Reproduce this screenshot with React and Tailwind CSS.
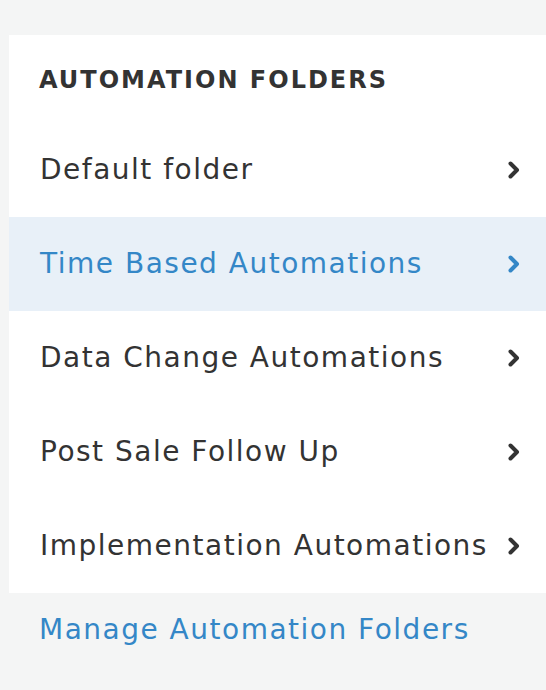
const folders = [
  'Default folder',
  'Time Based Automations',
  'Data Change Automations',
  'Post Sale Follow Up',
  'Implementation Automations',
];

const Chevron = () => (
  <svg
    width="14"
    height="20"
    viewBox="0 0 14 20"
    fill="none"
    stroke="currentColor"
    strokeWidth="4"
    strokeLinecap="round"
    strokeLinejoin="round"
  >
    <path d="M3.5 3.5L10 10l-6.5 6.5" />
  </svg>
);

const App = () => {
  const active = 1;

  return (
    <div className="w-[546px] min-h-[690px] bg-[#f4f5f5] pt-[35px] pl-[9px] font-['DejaVu_Sans',sans-serif]">
      <div className="bg-white">
        <div className="h-[88px] flex items-center pl-[30px] pt-[2px]">
          <span className="text-[24px] font-bold tracking-[2px] text-[#333] uppercase">
            Automation Folders
          </span>
        </div>
        {folders.map((name, i) => (
          <div
            key={name}
            className={
              i === active
                ? 'h-[94px] flex items-center justify-between pl-[31px] pr-[25px] bg-[#e8f0f8] text-[#3487c7]'
                : 'h-[94px] flex items-center justify-between pl-[31px] pr-[25px] text-[#333]'
            }
          >
            <span className="text-[28px] tracking-[1.5px] whitespace-nowrap">{name}</span>
            <Chevron />
          </div>
        ))}
      </div>
      <div className="h-[74px] flex items-center pl-[30px]">
        <a href="#" className="text-[28px] tracking-[1.5px] text-[#3487c7] whitespace-nowrap">
          Manage Automation Folders
        </a>
      </div>
    </div>
  );
};

export default App;
